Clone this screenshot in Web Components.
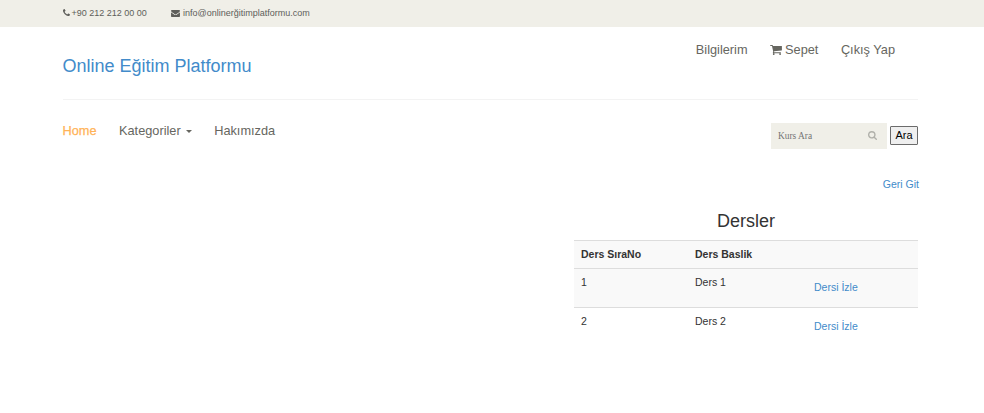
<!DOCTYPE html>
<html lang="tr">
<head>
<meta charset="utf-8">
<title>Online Eğitim Platformu</title>
<style>
html,body{margin:0;padding:0;background:#fff}
body{font-family:"Liberation Sans",Arial,sans-serif;font-size:10.5px;color:#333;height:413px;overflow:hidden}
</style>
</head>
<body>
<course-page></course-page>
<script>
const define = (name, html) => customElements.define(name, class extends HTMLElement {
  constructor() {
    super();
    const t = document.createElement('template');
    t.innerHTML = html;
    this.attachShadow({mode: 'open'}).append(t.content.cloneNode(true));
  }
});

const glyphs = {
  phone: ['0 0 1408 1408', 'M1408 1112q0 27-10 70.500t-21 68.500q-21 50-122 106q-94 51-186 51q-27 0-53-3.500t-57.500-12.500t-47-14.500t-55.500-20.500t-49-18q-98-35-175-83q-127-79-264-216t-216-264q-48-77-83-175q-3-9-18-49t-20.500-55.500t-14.500-47t-12.500-57.500t-3.500-53q0-92 51-186q56-101 106-122q25-11 68.500-21t70.500-10q14 0 21 3q18 6 53 76q11 19 30 54t35 63.500t31 53.500q3 4 17.500 25t21.500 35.500t7 28.500q0 20-28.500 50t-62 55t-62 53t-28.500 46q0 9 5 22.500t8.500 20.500t14 24t11.500 19q76 137 174 235t235 174q2 1 19 11.500t24 14t20.500 8.500t22.500 5q18 0 46-28.500t53-62t55-62t50-28.500q14 0 28.500 7t35.500 21.500t25 17.500q25 15 53.500 31t63.500 35t54 30q70 35 76 53q3 7 3 21z'],
  mail: ['0 0 1792 1408', 'M1792 454v794q0 66-47 113t-113 47H160q-66 0-113-47T0 1248V454q44 49 101 87q362 246 497 345q57 42 92.500 65.500T785 999.500t110 24.500h2q51 0 110-24.500t94.500-48T1194 886q170-123 498-345q57-39 100-87zM1792 160q0 79-49 151t-122 123q-376 261-468 325q-10 7-42.500 30.500t-54 38t-52 32.500t-57.500 27t-50 9h-2q-23 0-50-9t-57.500-27t-52-32.500t-54-38T639 759Q548 695 377 576.500T172 434q-62-42-117-115.500T0 182q0-78 41.500-130T160 0h1472q65 0 112.500 47T1792 160z'],
  cart: ['0 0 1664 1408', 'M640 1280q0 52-38 90t-90 38t-90-38t-38-90t38-90t90-38t90 38t38 90zM1536 1280q0 52-38 90t-90 38t-90-38t-38-90t38-90t90-38t90 38t38 90zM1664 192v512q0 24-16.500 42.500T1607 768L563 890q13 60 13 70q0 16-24 64h920q26 0 45 19t19 45t-19 45t-45 19H448q-26 0-45-19t-19-45q0-11 8-31.500t16-36t21.500-40T445 951L268 128H64q-26 0-45-19T0 64T19 19T64 0h256q16 0 28.500 6.500T368 22t13 24.500T389 73t5.500 29.500T399 128h1201q26 0 45 19t19 45z'],
  search: ['0 0 1664 1664', 'M1152 704q0-185-131.500-316.500T704 256T387.500 387.500T256 704t131.500 316.500T704 1152t316.500-131.500T1152 704zM1664 1536q0 52-38 90t-90 38q-54 0-90-38l-343-342q-179 124-399 124q-143 0-273.500-55.500t-225-150t-150-225T0 704t55.500-273.500t150-225t225-150T704 0t273.500 55.500t225 150t150 225T1408 704q0 220-124 399l343 343q37 37 37 90z']
};
customElements.define('ui-glyph', class extends HTMLElement {
  connectedCallback() {
    if (this.shadowRoot) return;
    const [box, d] = glyphs[this.getAttribute('name')];
    this.attachShadow({mode: 'open'}).innerHTML =
      `<style>:host{display:block;flex:none}svg{display:block;width:100%;height:100%}</style><svg viewBox="${box}"><path fill="currentColor" d="${d}"/></svg>`;
  }
});

define('contact-bar', `<style>
:host{display:flex;height:27px;padding-left:62px;background:#f0efe8;color:#5e5e5a;font-size:9px;line-height:26px}
div{display:flex}
.tel{width:109px}
.p{width:7px;height:7px;margin:9px 2px 0 .5px}
.m{width:9px;height:7px;margin:10px 3px 0 0}
</style>
<div class="tel"><ui-glyph class="p" name="phone"></ui-glyph><span>+90 212 212 00 00</span></div>
<div><ui-glyph class="m" name="mail"></ui-glyph><span>info@onlinerğitimplatformu.com</span></div>`);

define('site-header', `<style>
:host{display:flex;justify-content:space-between;box-sizing:border-box;height:73px;margin:0 66px 0 62.5px;border-bottom:1px solid #f3f3f3}
.brand{font-size:18px;line-height:20px;color:#428bca;margin-top:29px}
nav{display:flex;gap:22.5px;margin:15px 23px 0 0;font-size:12.75px;line-height:16px;color:#666660}
nav span{display:flex}
ui-glyph{width:12px;height:10px;margin:3px 3px 0 0}
</style>
<div class="brand">Online Eğitim Platformu</div>
<nav><span>Bilgilerim</span><span><ui-glyph name="cart"></ui-glyph>Sepet</span><span>Çıkış Yap</span></nav>`);

define('main-nav', `<style>
:host{display:flex;justify-content:space-between;height:66px;padding:0 66px 0 62.5px}
nav{display:flex;gap:22.5px;padding-top:23px;font-size:12.75px;line-height:16px;color:#666660}
.on{color:#ffb357;-webkit-text-stroke:.25px #ffb357}
.menu{display:flex}
.menu i{border:3px solid transparent;border-top-color:currentColor;border-bottom:0;height:0;margin:7px 0 0 5px}
form{display:flex;gap:3px;margin-top:23px}
.box{display:flex;box-sizing:border-box;justify-content:space-between;width:116px;height:26px;padding:0 10px 0 7px;background:#f0efe8;font:9.4px/26px "Liberation Serif",serif;color:#757575}
.box ui-glyph{width:9px;height:9px;margin-top:8px;color:#b0b0aa}
button{box-sizing:border-box;width:28px;height:19px;margin:3px 0 0;padding:0;border:1px solid #6b6b6b;border-radius:1px;background:#efefef;color:#000;font:11px/15px "Liberation Sans",sans-serif}
</style>
<nav><span class="on">Home</span><span class="menu">Kategoriler<i></i></span><span>Hakımızda</span></nav>
<form><div class="box"><span>Kurs Ara</span><ui-glyph name="search"></ui-glyph></div><button type="button">Ara</button></form>`);

define('lesson-row', `<style>
:host{display:grid;grid-template-columns:114px 119px 1fr;box-sizing:border-box;height:39px;padding:6px 7px 0;border-top:1px solid #ddd;line-height:15px}
:host([head]){height:28px;font-weight:bold;background:#f9f9f9}
:host([shade]){background:#f9f9f9}
::slotted(a){color:#428bca;padding-top:5px}
</style><slot></slot>`);

define('lesson-list', `<style>
:host{display:block;width:344px;margin:19px 0 0 574px}
h3{margin:0 0 9px;font-size:18px;font-weight:normal;line-height:20px;text-align:center}
</style><h3>Dersler</h3>
<lesson-row head><span>Ders SıraNo</span><span>Ders Baslik</span></lesson-row>
<lesson-row shade><span>1</span><span>Ders 1</span><a>Dersi İzle</a></lesson-row>
<lesson-row><span>2</span><span>Ders 2</span><a>Dersi İzle</a></lesson-row>`);

define('course-page', `<style>
:host{display:block}
.back{display:block;width:fit-content;margin:11px 65px 0 auto;line-height:15px;color:#428bca}
</style>
<contact-bar></contact-bar><site-header></site-header><main-nav></main-nav>
<a class="back">Geri Git</a><lesson-list></lesson-list>`);
</script>
</body>
</html>
